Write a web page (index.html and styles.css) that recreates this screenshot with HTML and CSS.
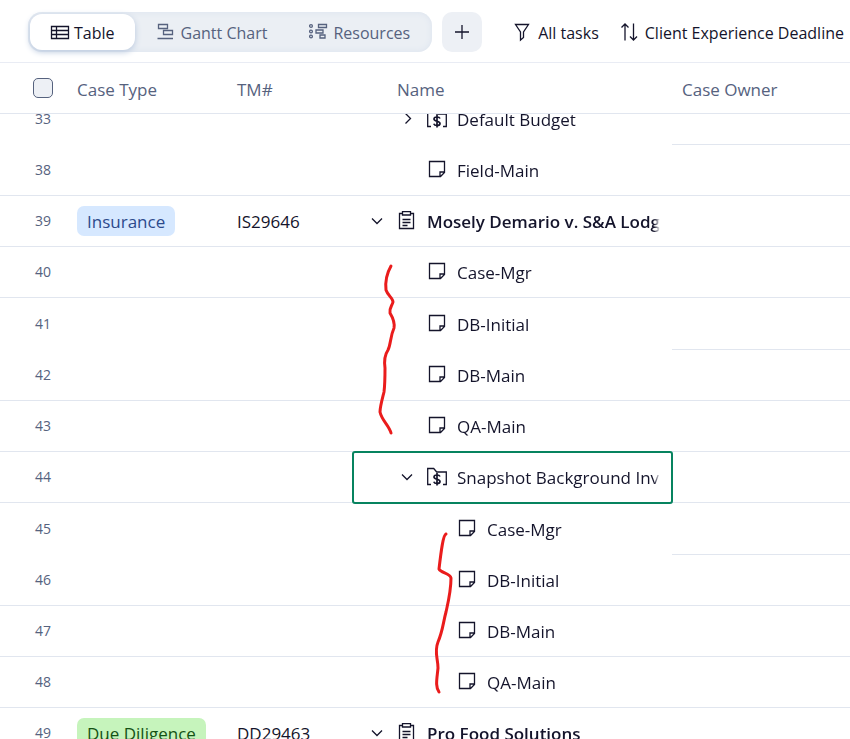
FILE: index.html
```html
<!DOCTYPE html>
<html lang="en">

<head>
  <meta charset="UTF-8">
  <meta name="viewport" content="width=device-width, initial-scale=1.0">
  <title>Cases</title>
  <link rel="stylesheet" href="styles.css">
</head>

<body>
  <svg class="sprite" aria-hidden="true">
    <symbol id="note" viewBox="0 0 20 20">
      <path d="M2.500 1.500h15v11l-4 4h-11z M17.500 12h-4.500v4.500" />
    </symbol>
    <symbol id="clipboard" viewBox="0 0 20 20">
      <path d="M5.500 2.500h-3v15h14v-15h-3 M5.500 .7h8v3.300h-8z M5.500 8.500h8 M5.500 11.500h8 M5.500 14.500h5" />
    </symbol>
    <symbol id="budget" viewBox="0 0 20 20">
      <path d="M4 17.500H.7V1.500h6l3 3.500h9.600v12.500H16" />
      <path class="dollar" d="M13 9.500C12.500 8.300 11.500 8 10 8 8.200 8 7 8.700 7 10c0 3 6 1.500 6 4.500C13 16 11.700 16.500 10 16.500c-1.700 0-2.800-.600-3.200-1.800 M10 6v12.500" />
    </symbol>
    <symbol id="down" viewBox="0 0 20 20">
      <path d="M5 7.500l5 5 5-5" />
    </symbol>
    <symbol id="right" viewBox="0 0 20 20">
      <path d="M8.500 4.500l5 5-5 5" />
    </symbol>
  </svg>

  <header class="toolbar">
    <nav class="tabs">
      <button class="tab active">
        <svg class="icon" viewBox="0 0 20 20"><path d="M1.500 4.500h17v12h-17z M1.500 8.500h17 M1.500 12.500h17 M6.500 4.500v12" /></svg>
        <span>Table</span>
      </button>
      <button class="tab">
        <svg class="icon" viewBox="0 0 20 20"><path d="M1.500 2.500h9v4h-9z M6.500 8.500h9v4h-9z M.500 16.500h15.500" /></svg>
        <span>Gantt Chart</span>
      </button>
      <button class="tab">
        <svg class="icon" viewBox="0 0 20 20"><path d="M9.500 2.500h8v3h-8z M7 8h7v3h-7z M11 13h5v3h-5z" /><circle cx="2" cy="4" r="1.400" /><circle cx="2" cy="9.500" r="1.400" /><circle cx="2" cy="14.500" r="1.400" /></svg>
        <span>Resources</span>
      </button>
    </nav>
    <button class="add" aria-label="Add view">
      <svg class="icon" viewBox="0 0 20 20"><path d="M10 3v14 M3 10h14" /></svg>
    </button>
    <button class="tool">
      <svg class="icon" viewBox="0 0 20 20"><path d="M3.500 2.500h13l-5 7.500v5.500l-3 2.500v-8z" /></svg>
      <span>All tasks</span>
    </button>
    <button class="tool">
      <svg class="icon" viewBox="0 0 20 20"><path d="M6 18.500V2 M2.500 5.500L6 2l3.500 3.500 M14.500 1.500V18 M11 14.500l3.500 3.500 3.500-3.500" /></svg>
      <span>Client Experience Deadline</span>
    </button>
  </header>

  <main class="grid" id="grid">
    <table>
      <colgroup>
        <col class="col-num">
        <col class="col-type">
        <col class="col-tm">
        <col class="col-name">
        <col>
      </colgroup>
      <thead>
        <tr>
          <th class="num"><input type="checkbox" aria-label="Select all"></th>
          <th>Case Type</th>
          <th>TM#</th>
          <th class="name-head">Name</th>
          <th>Case Owner</th>
        </tr>
      </thead>
      <tbody>
        <tr class="joined">
          <td class="num">33</td>
          <td></td>
          <td></td>
          <td><div class="name level2"><svg class="icon chevron"><use href="#right" /></svg><svg class="icon"><use href="#budget" /></svg><span>Default Budget</span></div></td>
          <td></td>
        </tr>
        <tr>
          <td class="num">38</td>
          <td></td>
          <td></td>
          <td><div class="name level2"><svg class="icon chevron"></svg><svg class="icon"><use href="#note" /></svg><span>Field-Main</span></div></td>
          <td></td>
        </tr>
        <tr>
          <td class="num">39</td>
          <td><span class="tag blue">Insurance</span></td>
          <td>IS29646</td>
          <td><div class="name case"><svg class="icon chevron"><use href="#down" /></svg><svg class="icon"><use href="#clipboard" /></svg><span>Mosely Demario v. S&amp;A Lodging</span></div></td>
          <td></td>
        </tr>
        <tr>
          <td class="num">40</td>
          <td></td>
          <td></td>
          <td><div class="name level2"><svg class="icon chevron"></svg><svg class="icon"><use href="#note" /></svg><span>Case-Mgr</span></div></td>
          <td></td>
        </tr>
        <tr class="joined tall">
          <td class="num">41</td>
          <td></td>
          <td></td>
          <td><div class="name level2"><svg class="icon chevron"></svg><svg class="icon"><use href="#note" /></svg><span>DB-Initial</span></div></td>
          <td></td>
        </tr>
        <tr>
          <td class="num">42</td>
          <td></td>
          <td></td>
          <td><div class="name level2"><svg class="icon chevron"></svg><svg class="icon"><use href="#note" /></svg><span>DB-Main</span></div></td>
          <td></td>
        </tr>
        <tr>
          <td class="num">43</td>
          <td></td>
          <td></td>
          <td><div class="name level2"><svg class="icon chevron"></svg><svg class="icon"><use href="#note" /></svg><span>QA-Main</span></div></td>
          <td></td>
        </tr>
        <tr>
          <td class="num">44</td>
          <td></td>
          <td></td>
          <td class="selected"><div class="name level2"><svg class="icon chevron"><use href="#down" /></svg><svg class="icon"><use href="#budget" /></svg><span>Snapshot Background Investigation</span></div></td>
          <td></td>
        </tr>
        <tr class="joined tall">
          <td class="num">45</td>
          <td></td>
          <td></td>
          <td><div class="name level3"><svg class="icon chevron"></svg><svg class="icon"><use href="#note" /></svg><span>Case-Mgr</span></div></td>
          <td></td>
        </tr>
        <tr>
          <td class="num">46</td>
          <td></td>
          <td></td>
          <td><div class="name level3"><svg class="icon chevron"></svg><svg class="icon"><use href="#note" /></svg><span>DB-Initial</span></div></td>
          <td></td>
        </tr>
        <tr>
          <td class="num">47</td>
          <td></td>
          <td></td>
          <td><div class="name level3"><svg class="icon chevron"></svg><svg class="icon"><use href="#note" /></svg><span>DB-Main</span></div></td>
          <td></td>
        </tr>
        <tr>
          <td class="num">48</td>
          <td></td>
          <td></td>
          <td><div class="name level3"><svg class="icon chevron"></svg><svg class="icon"><use href="#note" /></svg><span>QA-Main</span></div></td>
          <td></td>
        </tr>
        <tr>
          <td class="num">49</td>
          <td><span class="tag green">Due Diligence</span></td>
          <td>DD29463</td>
          <td><div class="name case"><svg class="icon chevron"><use href="#down" /></svg><svg class="icon"><use href="#clipboard" /></svg><span>Pro Food Solutions</span></div></td>
          <td></td>
        </tr>
      </tbody>
    </table>

    <!-- pen marks over the child tasks -->
    <svg class="ink" viewBox="370 258 100 450" aria-hidden="true">
      <path d="M391 266C387 273 385 281 386 290C388 296 393 298 393 302C392 306 389 308 390 313C393 318 395 322 394 328C390 337 391 344 388 350C384 356 384 361 385 368C385 376 385 384 384 392C382 400 380 407 380 412C382 421 389 425 391 433" />
      <path d="M446 534C443 535 441 552 439 569C441 573 450 573 451 578C451 591 448 603 446 612C443 623 443 630 438 642C434 652 438 658 438 668C437 679 435 686 439 692" />
    </svg>
  </main>

  <script>
    // start a little way down the list, under the sticky header
    document.getElementById('grid').scrollTop = 20;
  </script>
</body>

</html>
```

FILE: styles.css
```css
* {
  box-sizing: border-box;
}

body {
  font-family: "Open Sans", "Noto Sans", sans-serif;
  font-size: 17px;
  line-height: 24px;
  margin: 0;
  height: 100vh;
  display: flex;
  flex-direction: column;
  overflow: hidden;
  color: #14142b;
  background-color: #fff;
}

button {
  font: inherit;
  color: inherit;
  border: none;
  background: none;
  padding: 0;
  white-space: nowrap;
  cursor: pointer;
}

.sprite {
  display: none;
}

.icon {
  width: 20px;
  height: 20px;
  flex: none;
  fill: none;
  stroke: currentColor;
  stroke-width: 1.3;
}

.dollar {
  stroke-width: 1.7;
}

/* Toolbar */
.toolbar {
  display: flex;
  align-items: center;
  flex: none;
  height: 63px;
  padding: 1px 0 0 28px;
  font-size: 16px;
  border-bottom: 1px solid #e9ecf4;
}

.toolbar span {
  padding-top: 2px;
}

.tabs {
  display: flex;
  flex: none;
  gap: 2px;
  height: 40px;
  padding: 2px;
  border-radius: 14px;
  background-color: #ebeff4;
  box-shadow: inset 0 0 6px #dbe3ee;
}

.tab {
  display: flex;
  align-items: center;
  gap: 4px;
  padding: 0 20px;
  border-radius: 12px;
  color: #56627e;
}

.tab.active {
  color: #14142b;
  background-color: #fff;
  box-shadow: 0 2px 6px #b9c8de;
}

.add {
  display: flex;
  flex: none;
  align-items: center;
  justify-content: center;
  width: 40px;
  height: 40px;
  margin: 0 20px 0 10px;
  border-radius: 10px;
  background-color: #edf0f5;
}

.tool {
  display: flex;
  flex: none;
  align-items: center;
  gap: 6px;
  margin: 0 10px;
}

/* Table */
.grid {
  position: relative;
  flex: 1;
  min-height: 0;
  overflow: hidden;
}

table {
  width: 100%;
  table-layout: fixed;
  border-collapse: separate;
  border-spacing: 0;
}

.col-num {
  width: 67px;
}

.col-type {
  width: 160px;
}

.col-tm {
  width: 126px;
}

.col-name {
  width: 319px;
}

th,
td {
  height: 51px;
  padding: 2px 10px 0;
  text-align: left;
  white-space: nowrap;
  border-bottom: 1px solid #e1e6ef;
}

th {
  position: sticky;
  top: 0;
  z-index: 2;
  padding-top: 4px;
  font-weight: normal;
  color: #56627e;
  background-color: #fff;
}

th.name-head {
  padding-left: 44px;
}

th.num,
td.num {
  padding: 0 14px 0 33px;
  font-size: 14px;
  color: #56627e;
}

td.num {
  padding-left: 35px;
}

.joined td:not(:last-child) {
  border-bottom-color: transparent;
}

.tall td {
  height: 52px;
}

input[type="checkbox"] {
  appearance: none;
  display: block;
  width: 20px;
  height: 20px;
  margin: 0;
  border: 1px solid #56627e;
  border-radius: 5px;
  background-color: #edf0f5;
}

td:nth-child(2) {
  padding-top: 0;
}

.tag {
  display: inline-block;
  padding: 4px 10px 2px;
  border-radius: 7px;
}

.tag.blue {
  color: #2c4a8c;
  background-color: #d6e8ff;
}

.tag.green {
  color: #145214;
  background-color: #c6f4bc;
}

td:nth-child(4) {
  padding: 0 12px 0 14px;
}

.name {
  display: flex;
  align-items: center;
  gap: 10px;
}

.name span {
  flex: 1;
  padding-top: 2px;
  overflow: hidden;
  mask-image: linear-gradient(to left, transparent, #000 6px);
}

.level2 {
  padding-left: 30px;
}

.level3 {
  padding-left: 60px;
}

.case span {
  font-weight: 600;
}

.selected {
  outline: 2px solid #07835f;
  outline-offset: -1px;
  border-radius: 2px;
}

.ink {
  position: absolute;
  left: 370px;
  top: 215px;
  width: 100px;
  height: 450px;
  fill: none;
  stroke: #ea1c1c;
  stroke-width: 3;
  stroke-linecap: round;
  stroke-linejoin: round;
  pointer-events: none;
}
```
